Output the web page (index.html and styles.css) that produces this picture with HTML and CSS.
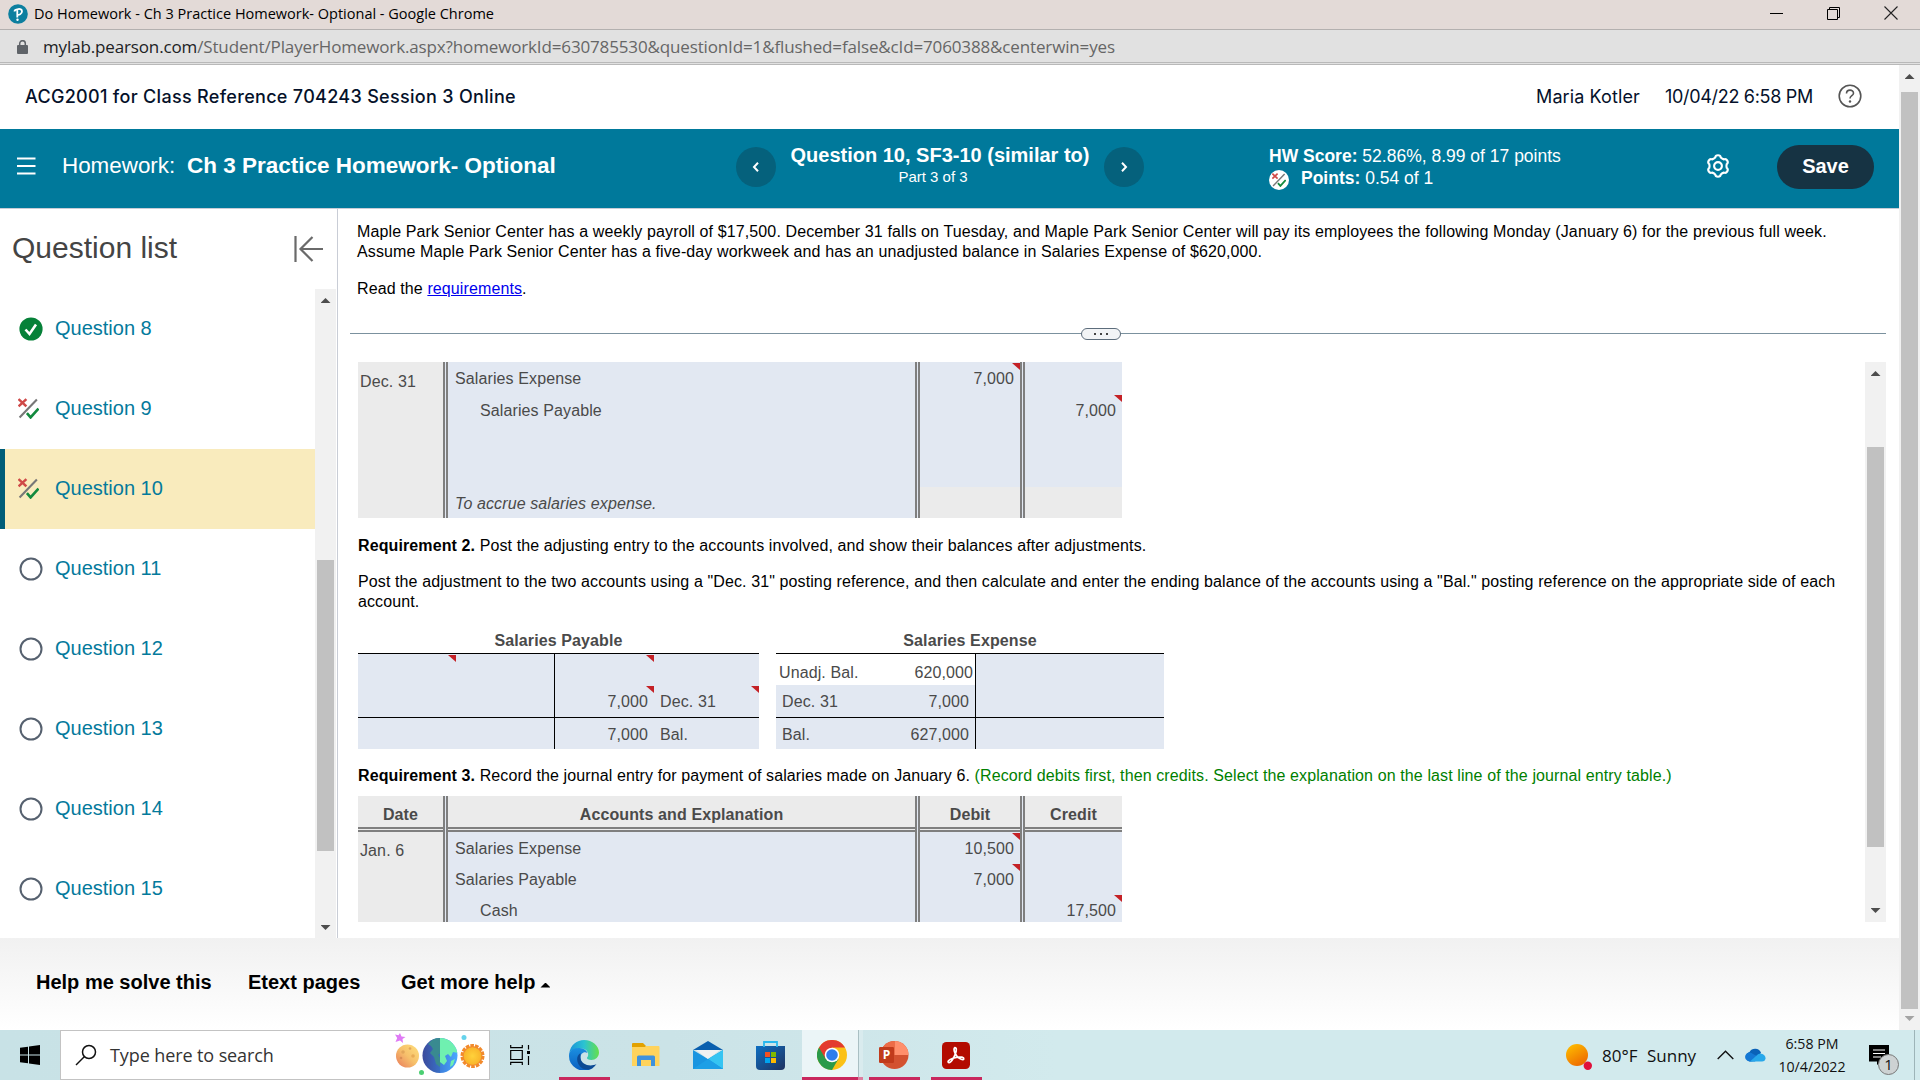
FILE: index.html
```html
<!DOCTYPE html>
<html lang="en">
<head>
    <meta charset="UTF-8">
    <title>Do Homework - Ch 3 Practice Homework- Optional</title>
    <link rel="stylesheet" href="styles.css">
</head>
<body>
    <!-- shared icons -->
    <svg class="defs" width="0" height="0">
        <symbol id="partial" viewBox="0 0 20 20">
            <path d="M1.500 18.500L18 1.500" stroke="#777" stroke-width="2" fill="none"/>
            <path d="M.5 1l7.500 7M8 1l-7.500 7" stroke="#cf4a48" stroke-width="2.400" fill="none"/>
            <path d="M8.500 14.500l3.500 4 7.500-8.500" stroke="#138a3e" stroke-width="2.500" fill="none"/>
        </symbol>
        <symbol id="open" viewBox="0 0 24 24">
            <circle cx="12" cy="12" r="10.500" fill="#fff" stroke="#56616f" stroke-width="2"/>
        </symbol>
    </svg>

    <div class="titlebar">
        <svg class="favicon" width="20" height="20" viewBox="0 0 20 20">
            <circle cx="10" cy="10" r="9.800" fill="#0d7f9f"/>
            <path d="M6.500 7.500c0-2.500 7.500-4 7.500-.3 0 3-3.200 4-4.700 3.600M9.300 5.500v8" stroke="#fff" stroke-width="1.800" fill="none"/>
            <circle cx="9.500" cy="15.800" r="1.200" fill="#fff"/>
        </svg>
        <span class="window-title">Do Homework - Ch 3 Practice Homework- Optional - Google Chrome</span>
        <div class="window-buttons">
            <svg width="14" height="14" viewBox="0 0 14 14"><path d="M0 7.500h13" stroke="#000"/></svg>
            <svg width="14" height="14" viewBox="0 0 14 14"><path d="M.5 3.500h10v10h-10zM2.500 3.500v-2h10v10h-2" stroke="#000" fill="none"/></svg>
            <svg width="14" height="14" viewBox="0 0 14 14"><path d="M.5.500l13 13M13.500.500l-13 13" stroke="#222" stroke-width="1.100"/></svg>
        </div>
    </div>
    <div class="urlbar">
        <svg class="lock" width="11" height="14" viewBox="0 0 11 14">
            <rect x="0" y="5" width="11" height="9" rx="1" fill="#5f6368"/>
            <path d="M2.700 6V3.500a2.800 2.800 0 0 1 5.600 0V6" stroke="#5f6368" stroke-width="1.500" fill="none"/>
        </svg>
        <span class="url"><b>mylab.pearson.com</b>/Student/PlayerHomework.aspx?homeworkId=630785530&amp;questionId=1&amp;flushed=false&amp;cId=7060388&amp;centerwin=yes</span>
    </div>

    <div class="viewport">
        <div class="app">
            <div class="course-bar">
                <span class="course">ACG2001 for Class Reference 704243 Session 3 Online</span>
                <span class="user">Maria Kotler</span>
                <span class="date">10/04/22 6:58 PM</span>
                <svg class="help" width="24" height="24" viewBox="0 0 24 24">
                    <circle cx="12" cy="12" r="10.800" fill="none" stroke="#555" stroke-width="1.600"/>
                    <path d="M8.500 9.500c0-4.600 7-4.400 7-.3 0 2.500-3.500 2.600-3.500 5.300" fill="none" stroke="#555" stroke-width="1.600"/>
                    <circle cx="12" cy="17.500" r="1.200" fill="#555"/>
                </svg>
            </div>

            <div class="hw-bar">
                <svg class="menu" width="19" height="18" viewBox="0 0 19 18"><path d="M0 1.500h18.500M0 9h18.500M0 16.500h18.500" stroke="#fff" stroke-width="2"/></svg>
                <span class="hw-label">Homework:</span>
                <span class="hw-name">Ch 3 Practice Homework- Optional</span>
                <div class="hw-nav">
                    <div class="round"><svg width="8" height="10" viewBox="0 0 8 10"><path d="M6 .8L2 5l4 4.200" stroke="#fff" stroke-width="2" fill="none"/></svg></div>
                    <div class="hw-question">
                        <div class="q-title">Question 10, SF3-10 (similar to)</div>
                        <div class="q-part">Part 3 of 3</div>
                    </div>
                    <div class="round"><svg width="8" height="10" viewBox="0 0 8 10"><path d="M2 .8L6 5 2 9.200" stroke="#fff" stroke-width="2" fill="none"/></svg></div>
                </div>
                <div class="score">
                    <div><b>HW Score:</b> 52.86%, 8.99 of 17 points</div>
                    <div class="points"><i><svg width="14" height="14"><use href="#partial"/></svg></i><span><b>Points:</b> 0.54 of 1</span></div>
                </div>
                <svg class="gear" width="24" height="24" viewBox="-12 -12 24 24" fill="none" stroke="#fff" stroke-width="2.100">
                    <path d="M-2.800-8.400C-2.400-11.500 2.400-11.500 2.800-8.400Q4.100-7.100 5.870-6.620C8.760-7.830 11.160-3.670 8.670-1.780Q8.200 0 8.670 1.780C11.160 3.670 8.760 7.830 5.870 6.620Q4.100 7.100 2.800 8.400C2.400 11.500-2.400 11.500-2.800 8.400Q-4.100 7.100-5.870 6.620C-8.760 7.830-11.160 3.670-8.670 1.780Q-8.200 0-8.670-1.780C-11.160-3.670-8.760-7.830-5.870-6.620Q-4.100-7.100-2.800-8.400z"/>
                    <circle r="3.900"/>
                </svg>
                <div class="save">Save</div>
            </div>

            <div class="main">
                <div class="sidebar">
                    <div class="side-head">
                        <span>Question list</span>
                        <svg width="29" height="26" viewBox="0 0 29 26"><path d="M1.500 0v26M29 13H7M18.500 1L6.500 13l12 12" stroke="#6a6a6a" stroke-width="2.200" fill="none"/></svg>
                    </div>
                    <div class="side-body">
                        <div class="q-list">
                            <div class="q-row">
                                <svg width="24" height="24" viewBox="0 0 24 24"><circle cx="12" cy="12" r="11.600" fill="#068139"/><path d="M6.500 12.500l4 4.500 6.500-9.500" stroke="#fff" stroke-width="2.600" fill="none"/></svg>
                                <span>Question 8</span>
                            </div>
                            <div class="q-row"><svg class="small" width="21" height="21"><use href="#partial"/></svg><span>Question 9</span></div>
                            <div class="q-row active"><svg class="small" width="21" height="21"><use href="#partial"/></svg><span>Question 10</span></div>
                            <div class="q-row"><svg width="24" height="24"><use href="#open"/></svg><span>Question 11</span></div>
                            <div class="q-row"><svg width="24" height="24"><use href="#open"/></svg><span>Question 12</span></div>
                            <div class="q-row"><svg width="24" height="24"><use href="#open"/></svg><span>Question 13</span></div>
                            <div class="q-row"><svg width="24" height="24"><use href="#open"/></svg><span>Question 14</span></div>
                            <div class="q-row"><svg width="24" height="24"><use href="#open"/></svg><span>Question 15</span></div>
                        </div>
                        <div class="scrollbar side-scroll"><div class="up"></div><div class="thumb"></div><div class="down"></div></div>
                    </div>
                </div>

                <div class="content">
                    <div class="problem">
                        <p class="l1">Maple Park Senior Center has a weekly payroll of $17,500. December 31 falls on Tuesday, and Maple Park Senior Center will pay its employees the following Monday (January 6) for the previous full week.</p>
                        <p class="l2">Assume Maple Park Senior Center has a five-day workweek and has an unadjusted balance in Salaries Expense of $620,000.</p>
                        <p class="read">Read the <a href="#">requirements</a>.</p>
                    </div>
                    <div class="divider"><div class="handle"><i></i><i></i><i></i></div></div>

                    <div class="work">
                        <div class="work-body">
                            <div class="journal first">
                                <div class="col day">Dec. 31</div>
                                <div class="col accounts">
                                    <div class="cell">Salaries Expense</div>
                                    <div class="cell indent">Salaries Payable</div>
                                    <div class="cell blank"></div>
                                    <div class="cell note">To accrue salaries expense.</div>
                                </div>
                                <div class="col amount">
                                    <div class="cell mark">7,000</div>
                                    <div class="cell"></div>
                                    <div class="cell blank"></div>
                                    <div class="cell grey"></div>
                                </div>
                                <div class="col amount">
                                    <div class="cell"></div>
                                    <div class="cell mark">7,000</div>
                                    <div class="cell blank"></div>
                                    <div class="cell grey"></div>
                                </div>
                            </div>

                            <p class="req"><b>Requirement 2.</b> Post the adjusting entry to the accounts involved, and show their balances after adjustments.</p>
                            <p class="post">Post the adjustment to the two accounts using a "Dec. 31" posting reference, and then calculate and enter the ending balance of the accounts using a "Bal." posting reference on the appropriate side of each<br>account.</p>

                            <div class="t-accounts">
                                <div class="t-account payable">
                                    <h4>Salaries Payable</h4>
                                    <div class="t-row"><span class="mark"></span><span></span><span class="mark line"></span><span></span></div>
                                    <div class="t-row"><span></span><span></span><span class="num mark line">7,000</span><span class="ref mark">Dec. 31</span></div>
                                    <div class="t-row total"><span></span><span></span><span class="num line">7,000</span><span class="ref">Bal.</span></div>
                                </div>
                                <div class="t-account expense">
                                    <h4>Salaries Expense</h4>
                                    <div class="t-row"><span class="given">Unadj. Bal.</span><span class="given num">620,000</span><span class="line"></span></div>
                                    <div class="t-row"><span class="ref">Dec. 31</span><span class="num">7,000</span><span class="line"></span></div>
                                    <div class="t-row total"><span class="ref">Bal.</span><span class="num">627,000</span><span class="line"></span></div>
                                </div>
                            </div>

                            <p class="req req3"><b>Requirement 3.</b> Record the journal entry for payment of salaries made on January 6. <em>(Record debits first, then credits. Select the explanation on the last line of the journal entry table.)</em></p>

                            <div class="journal second">
                                <div class="col day"><div class="head">Date</div>Jan. 6</div>
                                <div class="col accounts">
                                    <div class="head">Accounts and Explanation</div>
                                    <div class="cell">Salaries Expense</div>
                                    <div class="cell">Salaries Payable</div>
                                    <div class="cell indent">Cash</div>
                                </div>
                                <div class="col amount">
                                    <div class="head">Debit</div>
                                    <div class="cell mark">10,500</div>
                                    <div class="cell mark">7,000</div>
                                    <div class="cell"></div>
                                </div>
                                <div class="col amount">
                                    <div class="head">Credit</div>
                                    <div class="cell"></div>
                                    <div class="cell"></div>
                                    <div class="cell mark">17,500</div>
                                </div>
                            </div>
                        </div>
                        <div class="scrollbar work-scroll"><div class="up"></div><div class="thumb"></div><div class="down"></div></div>
                    </div>
                </div>
            </div>

            <div class="footer">
                <span class="f1">Help me solve this</span>
                <span class="f2">Etext pages</span>
                <span class="f3">Get more help</span>
                <i></i>
            </div>
        </div>
        <div class="scrollbar page-scroll"><div class="up"></div><div class="thumb"></div><div class="down"></div></div>
    </div>

    <div class="taskbar">
        <div class="start">
            <svg width="20" height="20" viewBox="0 0 20 20"><path d="M0 2.800l8-1.100v7.800H0zM9 1.500L20 0v9.500H9zM0 10.500h8v7.800l-8-1.100zM9 10.500h11V20L9 18.500z"/></svg>
        </div>
        <div class="search">
            <svg width="22" height="22" viewBox="0 0 22 22"><circle cx="14" cy="8" r="6.500" fill="none" stroke="#111" stroke-width="1.500"/><path d="M9.500 12.500L1 21" stroke="#111" stroke-width="1.500"/></svg>
            <span>Type here to search</span>
            <svg class="planets" width="94" height="48" viewBox="0 0 94 48">
                <defs>
                    <linearGradient id="moon" x1="0" y1="1" x2="1" y2="0"><stop offset="0" stop-color="#e9795b"/><stop offset=".5" stop-color="#f6c06b"/><stop offset="1" stop-color="#ffe07c"/></linearGradient>
                    <linearGradient id="sea" x1="0" x2="1"><stop offset="0" stop-color="#3f4fa6"/><stop offset=".5" stop-color="#3d7fdc"/><stop offset="1" stop-color="#4aa8ff"/></linearGradient>
                    <radialGradient id="sunny"><stop offset="0" stop-color="#ffd23b"/><stop offset="1" stop-color="#f9b52a"/></radialGradient>
                    <clipPath id="globe"><circle cx="46" cy="24.500" r="17.500"/></clipPath>
                </defs>
                <path d="M6 2l1.500 3.500L11.500 6 8.500 8l.5 4-3-2.500L1.500 11l1.700-4L1 3.500l3.500.7z" fill="#df7af5"/>
                <circle cx="13.500" cy="25" r="11.500" fill="url(#moon)"/>
                <circle cx="9" cy="21" r="1.800" fill="#e2a65a"/><circle cx="16" cy="17.500" r="1.300" fill="#e2a65a"/><circle cx="19" cy="25" r="1.800" fill="#e8ac56"/><circle cx="7" cy="27" r="1.300" fill="#d98f55"/>
                <circle cx="46" cy="24.500" r="17.500" fill="url(#sea)"/>
                <g clip-path="url(#globe)">
                    <path d="M34 13l6-6h7v15l-3 2 3 4-1 8-4-3-2-7-4-4 3-4-2-3z" fill="#3da096"/>
                    <path d="M46 6h8l8 9 2 7-5-1-2 5-3-3-3 2 2 5-3 4-4-3z" fill="#6ff0b0"/>
                    <path d="M57 30l4-2-2 6-3 2z" fill="#6ff0b0"/>
                    <path d="M28 5h18v40H28z" fill="#2c397c" opacity=".22"/>
                </g>
                <circle cx="27.500" cy="41.500" r="2.500" fill="#4bcf72"/>
                <circle cx="70" cy="6.500" r="2.500" fill="#66d3ec"/>
                <circle cx="78.500" cy="25" r="10.500" fill="none" stroke="#f28a2c" stroke-width="3" stroke-dasharray="3.600 1.100"/>
                <circle cx="78.500" cy="25" r="10" fill="#f28a2c"/>
                <circle cx="78.500" cy="25" r="8.800" fill="url(#sunny)"/>
            </svg>
        </div>
        <div class="task view">
            <svg width="21" height="20" viewBox="0 0 21 20"><path d="M.7 5.500h11.600v9H.7zM.7 0v2.700h11.600V0M.7 20v-2.700h11.600V20M18.500 0v4.500M18.500 11v9" fill="none" stroke="#000" stroke-width="1.200"/><path d="M17 6h3v3h-3z"/></svg>
        </div>
        <div class="task run">
            <svg width="30" height="30" viewBox="0 0 30 30">
                <defs>
                    <linearGradient id="e1" x1="0" x2="1"><stop offset="0" stop-color="#1b93d8"/><stop offset=".5" stop-color="#2bc3d2"/><stop offset="1" stop-color="#66e04a"/></linearGradient>
                    <linearGradient id="e2" x1="0" y1="0" x2="0" y2="1"><stop offset="0" stop-color="#1b8fe0"/><stop offset="1" stop-color="#0a5fc0"/></linearGradient>
                </defs>
                <path d="M.3 13C1.500 5 8 0 15 0c8.500 0 15 6 15 12.500 0 4.500-3.500 7.500-7.500 7.500-3 0-5-1-4.500-2.200 3-3.300.5-9.300-6-9.300C7 8.500 2 10 .3 13z" fill="url(#e1)"/>
                <path d="M.3 13C2 9.500 6 7.800 10.500 8c4 .3 7 2.200 8 5-4-2-7 1-7 4.500 0 6 5 11 12 10.500A15 15 0 0 1 .3 13z" fill="url(#e2)"/>
                <path d="M11.500 13c-5 3-4.500 11 2 15.500 5.500 2.600 11 .5 14-4.500-7 3.500-15 0-16-5.500-.3-2 0-4 0-5.500z" fill="#0c4a94"/>
            </svg>
        </div>
        <div class="task">
            <svg width="28" height="24" viewBox="0 0 28 24"><path d="M0 1q0-1 1-1h10l3 3-1 3H0z" fill="#e2a100"/><path d="M0 4h13l1-1h12.500q1 0 1 1v19H0z" fill="#ffd35c"/><path d="M5 23V14q0-1.500 1.500-1.500h15Q23 12.500 23 14v9h-4v-6H9v6z" fill="#3f92dc"/></svg>
        </div>
        <div class="task">
            <svg width="30" height="28" viewBox="0 0 30 28"><path d="M0 9L15 0l15 9z" fill="#0a5fae"/><path d="M0 9l15 9L30 9v19H0z" fill="#1a95e0"/><path d="M3 9h24l-12 9z" fill="#f1f1f1"/><path d="M15 18L30 9v19z" fill="#35c4f2"/><path d="M0 28h30L15 18z" fill="#1d9fe6"/></svg>
        </div>
        <div class="task">
            <svg width="29" height="29" viewBox="0 0 29 29"><defs><linearGradient id="bag" x1="0" y1="0" x2="1" y2="1"><stop offset="0" stop-color="#0e6fc2"/><stop offset="1" stop-color="#1f3260"/></linearGradient></defs><path d="M0 5h29v20q0 4-4 4H4q-4 0-4-4z" fill="url(#bag)"/><path d="M8 6V1h13v5" fill="none" stroke="#29b8ee" stroke-width="1.800"/><path d="M9 11h5v5H9z" fill="#f25022"/><path d="M15 11h5v5h-5z" fill="#7fba00"/><path d="M9 17h5v5H9z" fill="#00a4ef"/><path d="M15 17h5v5h-5z" fill="#ffb900"/></svg>
        </div>
        <div class="task run current">
            <svg width="30" height="30" viewBox="0 0 30 30"><circle cx="15" cy="15" r="15" fill="#fbc116"/><path d="M15 15L2 7.500A15 15 0 0 1 28 7.500H15z" fill="#e33b2e"/><path d="M2 7.500A15 15 0 0 0 15 30l6.500-11.200L15 15z" fill="#2a9a49"/><path d="M2 7.500L8.500 18.700 15 7.500z" fill="#e33b2e"/><circle cx="15" cy="15" r="7.300" fill="#fff"/><circle cx="15" cy="15" r="5.800" fill="#2f7ded"/></svg>
        </div>
        <div class="task run ppt">
            <svg width="30" height="28" viewBox="0 0 30 28"><circle cx="15.500" cy="14" r="14" fill="#d35230"/><path d="M15.500 0a14 14 0 0 1 14 14h-14z" fill="#ff8f6b"/><path d="M15.500 0v14h-14a14 14 0 0 1 14-14z" fill="#ed6c47"/><rect y="6" width="15" height="16" rx="1.200" fill="#c13b1b"/><text x="3.800" y="18.300" class="ppt-p">P</text></svg>
        </div>
        <div class="task run acro">
            <svg width="28" height="27" viewBox="0 0 28 27"><rect width="28" height="27" rx="4.500" fill="#b30b00"/><path d="M13 5.500c2.500 0 1 6.500-1.500 10.500-1.500 2.500-3.500 5-5 4.500-2-1.500 3-4.500 8-5.200 4.500-.8 7.500 0 7.300 1.500-.3 1.800-4.300.2-6.800-2.600C12.500 11.500 11 6.500 13 5.500z" fill="none" stroke="#fff" stroke-width="1.700"/></svg>
        </div>
        <div class="tray">
            <svg class="weather" width="28" height="28" viewBox="0 0 28 28"><defs><linearGradient id="w" x1="0" y1="0" x2=".6" y2="1"><stop offset="0" stop-color="#ffc400"/><stop offset="1" stop-color="#ee6c00"/></linearGradient></defs><circle cx="12" cy="12" r="11" fill="url(#w)"/><circle cx="22.800" cy="22.800" r="4.200" fill="#e0103a"/></svg>
            <span class="temp">80°F</span>
            <span class="sunny">Sunny</span>
            <svg class="chev" width="17" height="10" viewBox="0 0 17 10"><path d="M.7 9L8.500 1.200 16.300 9" fill="none" stroke="#111" stroke-width="1.400"/></svg>
            <svg class="cloud" width="21" height="14" viewBox="0 0 21 14"><path d="M5 13.500a5 5 0 0 1-.5-9.500A6.500 6.500 0 0 1 16 4.500l-4 8z" fill="#0a62b8"/><path d="M4.500 13.500A4.500 4.500 0 1 1 8 6l6 3-4 4.500z" fill="#1478d4"/><path d="M5 13.500l8-7.300c4 -1.500 7.500 1 7.500 4 0 2-1.500 3.300-3.500 3.300z" fill="#28a8ea"/></svg>
            <div class="clock"><span>6:58 PM</span><span>10/4/2022</span></div>
            <div class="notes">
                <svg width="20" height="20" viewBox="0 0 20 20"><path d="M0 0h20v16.500H12L8 20v-3.500H0z"/><path d="M4 5h12M4 8.500h12M4 12h8" stroke="#fff" stroke-width="1.200"/></svg>
                <div class="badge">1</div>
            </div>
        </div>
    </div>
</body>
</html>
```
FILE: styles.css
```css
* {
    box-sizing: border-box;
    margin: 0;
    padding: 0;
}

body {
    width: 1920px;
    height: 1080px;
    overflow: hidden;
    display: flex;
    flex-direction: column;
    background: #fff;
    font-family: "Liberation Sans", Arial, sans-serif;
    font-size: 16px;
    color: #000;
    white-space: nowrap;
}

svg {
    display: block;
    flex: none;
}

.defs {
    position: absolute;
}

/* browser window */
.titlebar {
    height: 30px;
    display: flex;
    align-items: center;
    padding: 0 22px 2px 8px;
    background: #e3dad7;
    border-bottom: 1px solid #b3b0af;
    font-family: "Open Sans", sans-serif;
    font-size: 14.5px;
}

.window-title {
    margin-left: 6px;
    line-height: 28px;
}

.window-buttons {
    display: flex;
    gap: 43px;
    margin-left: auto;
    margin-bottom: 1px;
}

.urlbar {
    height: 35px;
    display: flex;
    align-items: center;
    padding: 1px 0 0 17px;
    background: #e1e1e1;
    border-bottom: 3px double #b9b9b9;
    font-family: "Open Sans", sans-serif;
    font-size: 17px;
    letter-spacing: -0.14px;
    color: #666;
}

.url {
    margin-left: 15px;
}

.url b {
    font-weight: 400;
    color: #202124;
}

.viewport {
    height: 965px;
    display: flex;
}

.app {
    width: 1899px;
    display: flex;
    flex-direction: column;
}

/* scrollbars */
.scrollbar {
    width: 21px;
    flex: none;
    display: flex;
    flex-direction: column;
    align-items: center;
    background: #f1f1f1;
}

.scrollbar .thumb {
    width: 17px;
    background: #c1c1c1;
}

.up,
.down {
    width: 10px;
    height: 5px;
    background: #4d4d4d;
    clip-path: polygon(0 100%, 50% 0, 100% 100%);
}

.down {
    margin-top: auto;
    clip-path: polygon(0 0, 100% 0, 50% 100%);
}

.page-scroll .up { margin-top: 9px; }
.page-scroll .thumb { margin-top: 13px; height: 917px; }
.page-scroll .down { margin-bottom: 9px; background: #a3a3a3; }

.side-scroll .up { margin-top: 9px; }
.side-scroll .thumb { margin-top: 257px; height: 291px; }
.side-scroll .down { margin-bottom: 8px; }

.work-scroll .up { margin-top: 9px; }
.work-scroll .thumb { margin-top: 71px; height: 400px; }
.work-scroll .down { margin-bottom: 9px; }

/* course bar */
.course-bar {
    height: 64px;
    display: flex;
    align-items: center;
    padding: 0 37px 2px 25px;
    font-family: Inter, sans-serif;
    font-size: 18px;
    color: #05112a;
}

.course {
    font-weight: 500;
    letter-spacing: 0.31px;
    margin-right: auto;
}

.user {
    margin-right: 25px;
    letter-spacing: 0.1px;
}

.date {
    margin-right: 25px;
    letter-spacing: -0.3px;
}

/* homework bar */
.hw-bar {
    height: 80px;
    display: flex;
    align-items: center;
    padding: 0 25px 6px 17px;
    background: #00799b;
    border-bottom: 1px solid #c7ccd6;
    color: #fff;
}

.hw-label {
    width: 125px;
    margin-left: 26px;
    font-size: 22.4px;
}

.hw-name {
    width: 549px;
    font-size: 22.5px;
    font-weight: bold;
}

.hw-nav {
    display: flex;
    align-items: center;
    width: 533px;
}

.round {
    width: 40px;
    height: 40px;
    margin-top: 2px;
    border-radius: 50%;
    display: flex;
    align-items: center;
    justify-content: center;
    background: #05617c;
}

.hw-question {
    width: 328px;
    text-align: center;
}

.q-title {
    font-size: 20px;
    font-weight: bold;
    line-height: 22px;
}

.q-part {
    font-size: 15px;
    line-height: 22px;
    margin-right: 14px;
}

.score {
    width: 437px;
    margin-top: 2px;
    font-size: 17.5px;
    line-height: 22px;
}

.points {
    display: flex;
    align-items: center;
}

.points i {
    width: 20px;
    height: 20px;
    margin: 3px 12px -1px 0;
    border-radius: 50%;
    background: #fff;
    display: flex;
    align-items: center;
    justify-content: center;
}

.save {
    width: 97px;
    height: 44px;
    margin: 2px 0 0 auto;
    border-radius: 22px;
    background: #163343;
    text-align: center;
    font-size: 20px;
    font-weight: bold;
    line-height: 43px;
}

/* question list */
.main {
    height: 729px;
    display: flex;
}

.sidebar {
    width: 338px;
    border-right: 1px solid #c9cdd6;
}

.side-head {
    height: 80px;
    display: flex;
    align-items: center;
    justify-content: space-between;
    padding: 0 14px 3px 12px;
    font-size: 30px;
    color: #444;
}

.side-head svg {
    margin-top: 2px;
}

.side-body {
    height: 649px;
    display: flex;
}

.q-list {
    width: 315px;
}

.q-row {
    height: 80px;
    display: flex;
    align-items: center;
    padding-left: 18px;
    font-size: 20px;
    color: #047a9c;
}

.q-row svg {
    margin: -1px 12px 0 1px;
}

.q-row .small {
    margin: -2px 16px 0 0;
}

.q-row span {
    margin-top: -2px;
}

.q-row.active {
    padding-left: 13px;
    border-left: 5px solid #005d79;
    background: #f9ebbd;
}

/* problem statement */
.content {
    flex: 1;
    padding: 12px 13px 0 12px;
    letter-spacing: 0.11px;
}

.problem {
    height: 112px;
    padding: 1px 0 0 7px;
    line-height: 20px;
}

.l1 {
    letter-spacing: 0.12px;
}

.read {
    margin-top: 17px;
}

.read a {
    color: #0000ee;
}

.divider {
    height: 1px;
    background: #7b919e;
    position: relative;
}

.handle {
    position: absolute;
    left: 731px;
    top: -5px;
    width: 40px;
    height: 12px;
    border: 1px solid #5d6d7c;
    border-radius: 6px;
    background: #f2f4f6;
    display: flex;
    align-items: center;
    justify-content: center;
    gap: 4px;
}

.handle i {
    width: 2px;
    height: 2px;
    background: #444;
}

.work {
    height: 560px;
    margin-top: 28px;
    display: flex;
    overflow: hidden;
}

.work-body {
    width: 1515px;
    padding-left: 8px;
    line-height: 20px;
}

/* journal tables */
.journal {
    width: 764px;
    display: grid;
    grid-template-columns: 85px 472px 105px 102px;
    color: #4a4a4a;
}

.first {
    height: 156px;
}

.col {
    background: #e2e8f2;
    border-left: 5px double #7f7f7f;
}

.col.day {
    padding: 10px 0 0 2px;
    border-left: none;
    background: #ebebeb;
}

.second .day {
    padding-top: 0;
}

.second .day .head {
    margin: 0 0 9px -2px;
}

.head {
    height: 36px;
    border-bottom: 5px double #7f7f7f;
    background: #ebebeb;
    text-align: center;
    font-weight: bold;
    line-height: 37px;
}

.cell {
    position: relative;
    height: 31px;
    line-height: 33px;
    padding-left: 7px;
}

.first .cell:first-child {
    height: 32px;
}

.cell.blank {
    height: 62px;
}

.cell.indent {
    padding-left: 32px;
}

.cell.note {
    font-style: italic;
}

.cell.grey {
    background: #ebebeb;
}

.amount .cell {
    text-align: right;
    padding-right: 6px;
}

/* red corner on graded answers */
.mark {
    position: relative;
}

.mark::after {
    content: "";
    position: absolute;
    top: 1px;
    right: 0;
    width: 8px;
    height: 7px;
    background: #c42126;
    clip-path: polygon(0 0, 100% 0, 100% 100%);
}

.req {
    margin-top: 18px;
}

.post {
    margin-top: 16px;
}

.t-accounts {
    display: flex;
    gap: 17px;
    margin-top: 15px;
    color: #4a4a4a;
}

.t-account h4 {
    height: 27px;
    font-size: 16px;
    line-height: 28px;
    text-align: center;
    border-bottom: 1px solid #000;
}

.payable { width: 401px; }
.expense { width: 388px; }

.t-row {
    display: grid;
    grid-template-rows: 100%;
    height: 31px;
    line-height: 34px;
    background: #e2e8f2;
}

.payable .t-row { grid-template-columns: 98px 98px 100px 105px; }
.expense .t-row { grid-template-columns: 99px 100px 189px; }

.t-row:nth-child(3) {
    height: 32px;
}

.t-row.total {
    height: 32px;
    border-top: 1px solid #000;
}

.t-row .line {
    border-left: 1px solid #000;
}

.t-row .num {
    text-align: right;
    padding-right: 6px;
}

.t-row .ref {
    padding-left: 6px;
}

.t-row .given {
    background: #fff;
    padding-left: 3px;
    line-height: 37px;
}

.t-row .given.num {
    padding-right: 2px;
}

.req3 {
    margin-top: 17px;
    margin-bottom: 10px;
}

.req3 em {
    font-style: normal;
    color: #008000;
}

/* footer */
.footer {
    height: 92px;
    display: flex;
    align-items: center;
    padding: 0 0 3px 36px;
    background: linear-gradient(#f1f1f1, #fff);
    font-size: 20px;
    font-weight: bold;
}

.f1 { width: 212px; }
.f2 { width: 153px; }

.footer i {
    width: 10px;
    height: 5px;
    margin: 5px 0 0 5px;
    background: #000;
    clip-path: polygon(0 100%, 50% 0, 100% 100%);
}

/* taskbar */
.taskbar {
    height: 50px;
    display: flex;
    background: linear-gradient(90deg, #c8e2e6, #cbe3e7 35%, #d2eaed 55%, #d2eaed);
    font-family: "Open Sans", sans-serif;
}

.start {
    width: 60px;
    padding: 15px 0 0 20px;
}

.search {
    width: 430px;
    display: flex;
    align-items: center;
    padding-left: 14px;
    border: 1px solid #c3c3c3;
    background: #fff;
    font-size: 18px;
    letter-spacing: -0.1px;
    color: #333;
}

.search span {
    width: 164px;
    margin-left: 13px;
}

.planets {
    margin-left: 120px;
}

.task {
    width: 62px;
    display: flex;
    align-items: center;
    justify-content: center;
    position: relative;
}

.task.view {
    width: 63px;
    padding-right: 3px;
}

.task.run::after {
    content: "";
    position: absolute;
    left: 6px;
    bottom: 0;
    width: 51px;
    height: 3px;
    background: #c9285d;
}

.task.current::before {
    content: "";
    position: absolute;
    left: 1px;
    top: 0;
    width: 61px;
    height: 50px;
    background: linear-gradient(90deg, #ebf5f7 56px, #a9bfc3 56px, #a9bfc3 57px, #d9ebee 57px);
}

.task.current svg {
    position: relative;
}

.task.current::after {
    left: 1px;
    width: 61px;
    background: linear-gradient(90deg, #c9285d 56px, #de7d9f 56px);
}

.acro::after {
    background: linear-gradient(90deg, #c9285d 41px, #de7d9f 41px);
}

.ppt-p {
    font: bold 12px "Open Sans", sans-serif;
    fill: #fff;
}

.tray {
    margin-left: auto;
    width: 355px;
    display: flex;
    align-items: center;
    font-size: 17px;
    color: #111;
}

.weather { margin-top: 4px; }
.temp { width: 44px; margin-left: 9px; }
.sunny { width: 50px; margin-left: 1px; }
.chev { margin-left: 20px; }
.cloud { margin-left: 11px; }

.clock {
    width: 68px;
    margin-left: 12px;
    display: flex;
    flex-direction: column;
    align-items: center;
    font-size: 14.2px;
    line-height: 23px;
}

.notes {
    position: relative;
    width: 46px;
    height: 50px;
    margin-left: 23px;
    padding-top: 15px;
    border-right: 1px solid #9db4b8;
}

.badge {
    position: absolute;
    left: 9px;
    top: 24px;
    width: 21px;
    height: 21px;
    border: 1px solid #777;
    border-radius: 50%;
    background: #cdd2d3;
    text-align: center;
    font-size: 15px;
    line-height: 19px;
}
```
